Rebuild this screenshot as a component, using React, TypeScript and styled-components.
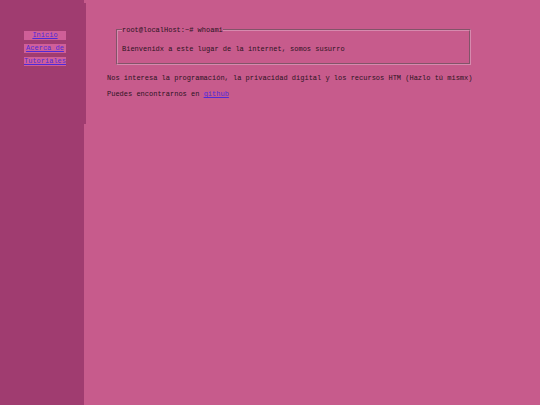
import React from 'react';
import styled, { createGlobalStyle } from 'styled-components';

const GlobalStyle = createGlobalStyle`
  html, body {
    margin: 0;
    padding: 0;
    background: #c75b8c;
  }
  body {
    font-family: "Liberation Mono", "DejaVu Sans Mono", monospace;
    font-size: 7px;
    color: #2b1322;
  }
`;

const Page = styled.div`
  display: grid;
  grid-template-columns: 84px 1fr;
  min-height: 100vh;
`;

const Aside = styled.aside`
  background: #a03c70;
`;

const Nav = styled.nav`
  margin-top: 3px;
  width: 86px;
  height: 121px;
  background: #a03c70;
  display: flex;
  flex-direction: column;
  align-items: center;
  padding-top: 28px;
  padding-left: 4px;
  box-sizing: border-box;
  gap: 4px;
`;

const NavLink = styled.a`
  display: block;
  width: 42px;
  height: 9px;
  line-height: 9px;
  text-align: center;
  background: #cf5f98;
  color: #4f2ad8;
  text-decoration: underline;
`;

const Main = styled.main`
  padding: 26px 0 0 23px;
`;

const Terminal = styled.fieldset`
  margin: 0 69px 0 9px;
  padding: 11px 4px 10px 4px;
  border: 2px groove #d68aae;
  line-height: 8px;
`;

const Prompt = styled.legend`
  padding: 0;
  line-height: 8px;
`;

const Line = styled.p`
  margin: 0;
  line-height: 8px;
`;

const Para = styled.p`
  margin: 9px 0 0 0;
  line-height: 8px;

  & + & {
    margin-top: 8px;
  }
`;

const Link = styled.a`
  color: #4f2ad8;
  text-decoration: underline;
`;

export default function App() {
  return (
    <>
      <GlobalStyle />
      <Page>
        <Aside>
          <Nav>
            <NavLink href="#">Inicio</NavLink>
            <NavLink href="#">Acerca de</NavLink>
            <NavLink href="#">Tutoriales</NavLink>
          </Nav>
        </Aside>
        <Main>
          <Terminal>
            <Prompt>root@localHost:~# whoami</Prompt>
            <Line>Bienvenidx a este lugar de la internet, somos susurro</Line>
          </Terminal>
          <Para>Nos interesa la programación, la privacidad digital y los recursos HTM (Hazlo tú mismx)</Para>
          <Para>
            Puedes encontrarnos en <Link href="#">github</Link>
          </Para>
        </Main>
      </Page>
    </>
  );
}
